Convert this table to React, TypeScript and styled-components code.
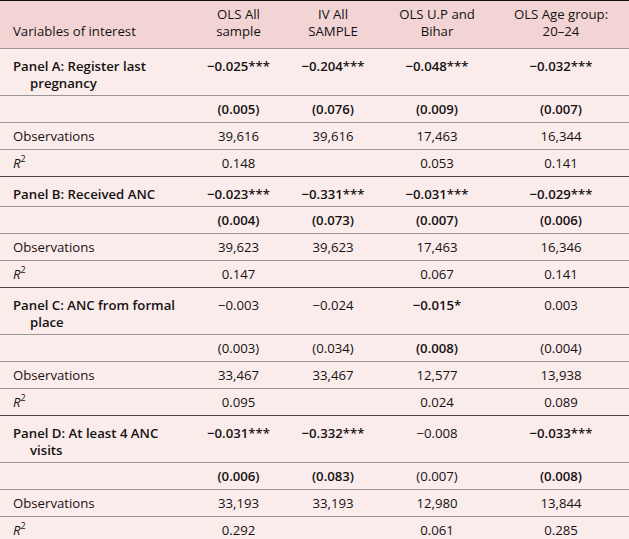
import React from "react";
import styled, { createGlobalStyle } from "styled-components";

const GlobalStyle = createGlobalStyle`
  html, body {
    margin: 0;
    padding: 0;
    background: #fbecec;
  }
  body {
    font-family: "Open Sans", "Noto Sans", sans-serif;
    color: #141212;
  }
`;

const Table = styled.table`
  width: 629px;
  border-collapse: separate;
  border-spacing: 0;
  table-layout: fixed;
  font-size: 13.2px;
  line-height: 17px;
  background: #fbecec;
  border-top: 1px solid #111;
  border-bottom: 1px solid #111;
`;

const Col = styled.col<{ $w: number }>`
  width: ${p => p.$w}px;
`;

const HeadRow = styled.tr`
  background: #f3d4d5;
`;

const HeadCell = styled.th<{ $left?: boolean }>`
  font-weight: 400;
  text-align: ${p => (p.$left ? "left" : "center")};
  vertical-align: bottom;
  padding: ${p => (p.$left ? "0 12px 8px 13px" : "0 6px 8px")};
  height: 39px;
  line-height: 17px;
`;

const Row = styled.tr<{ $strong?: boolean }>`
  & > td {
    border-top: 1px solid ${p => (p.$strong ? "#4a4646" : "#9d9696")};
  }
`;

const Label = styled.td<{ $panel?: boolean }>`
  text-align: left;
  vertical-align: top;
  padding: ${p => (p.$panel ? "9px 12px 3px 30px" : "5px 12px 4px 13px")};
  text-indent: ${p => (p.$panel ? "-17px" : "0")};
  font-weight: ${p => (p.$panel ? 600 : 400)};
`;

const Value = styled.td<{ $bold?: boolean; $panel?: boolean }>`
  text-align: center;
  vertical-align: top;
  padding: ${p => (p.$panel ? "9px 6px 3px" : "5px 6px 4px")};
  font-weight: ${p => (p.$bold ? 600 : 400)};
  white-space: nowrap;
`;

const Italic = styled.i`
  font-style: italic;
`;

const Sup = styled.sup`
  font-size: 9px;
  line-height: 0;
  vertical-align: 6px;
`;

type Cell = [string, boolean];

interface Panel {
  title: string;
  coef: Cell[];
  se: Cell[];
  obs: string[];
  r2: string[];
}

const panels: Panel[] = [
  {
    title: "Panel A: Register last pregnancy",
    coef: [
      ["−0.025***", true],
      ["−0.204***", true],
      ["−0.048***", true],
      ["−0.032***", true],
    ],
    se: [
      ["(0.005)", true],
      ["(0.076)", true],
      ["(0.009)", true],
      ["(0.007)", true],
    ],
    obs: ["39,616", "39,616", "17,463", "16,344"],
    r2: ["0.148", "", "0.053", "0.141"],
  },
  {
    title: "Panel B: Received ANC",
    coef: [
      ["−0.023***", true],
      ["−0.331***", true],
      ["−0.031***", true],
      ["−0.029***", true],
    ],
    se: [
      ["(0.004)", true],
      ["(0.073)", true],
      ["(0.007)", true],
      ["(0.006)", true],
    ],
    obs: ["39,623", "39,623", "17,463", "16,346"],
    r2: ["0.147", "", "0.067", "0.141"],
  },
  {
    title: "Panel C: ANC from formal place",
    coef: [
      ["−0.003", false],
      ["−0.024", false],
      ["−0.015*", true],
      ["0.003", false],
    ],
    se: [
      ["(0.003)", false],
      ["(0.034)", false],
      ["(0.008)", true],
      ["(0.004)", false],
    ],
    obs: ["33,467", "33,467", "12,577", "13,938"],
    r2: ["0.095", "", "0.024", "0.089"],
  },
  {
    title: "Panel D: At least 4 ANC visits",
    coef: [
      ["−0.031***", true],
      ["−0.332***", true],
      ["−0.008", false],
      ["−0.033***", true],
    ],
    se: [
      ["(0.006)", true],
      ["(0.083)", true],
      ["(0.007)", false],
      ["(0.008)", true],
    ],
    obs: ["33,193", "33,193", "12,980", "13,844"],
    r2: ["0.292", "", "0.061", "0.285"],
  },
];

const App: React.FC = () => {
  return (
    <>
      <GlobalStyle />
      <Table>
        <colgroup>
          <Col $w={192} />
          <Col $w={93} />
          <Col $w={96} />
          <Col $w={112} />
          <Col $w={136} />
        </colgroup>
        <thead>
          <HeadRow>
            <HeadCell $left>Variables of interest</HeadCell>
            <HeadCell>
              OLS All
              <br />
              sample
            </HeadCell>
            <HeadCell>
              IV All
              <br />
              SAMPLE
            </HeadCell>
            <HeadCell>
              OLS U.P and
              <br />
              Bihar
            </HeadCell>
            <HeadCell>
              OLS Age group:
              <br />
              20–24
            </HeadCell>
          </HeadRow>
        </thead>
        <tbody>
          {panels.map((panel, index) => (
            <React.Fragment key={`panel${index}`}>
              <Row $strong={index > 0}>
                <Label $panel>{panel.title}</Label>
                {panel.coef.map(([text, bold], i) => (
                  <Value key={i} $bold={bold} $panel>
                    {text}
                  </Value>
                ))}
              </Row>
              <Row>
                <Label />
                {panel.se.map(([text, bold], i) => (
                  <Value key={i} $bold={bold}>
                    {text}
                  </Value>
                ))}
              </Row>
              <Row>
                <Label>Observations</Label>
                {panel.obs.map((text, i) => (
                  <Value key={i}>{text}</Value>
                ))}
              </Row>
              <Row>
                <Label>
                  <Italic>R</Italic>
                  <Sup>2</Sup>
                </Label>
                {panel.r2.map((text, i) => (
                  <Value key={i}>{text}</Value>
                ))}
              </Row>
            </React.Fragment>
          ))}
        </tbody>
      </Table>
    </>
  );
};

export default App;
